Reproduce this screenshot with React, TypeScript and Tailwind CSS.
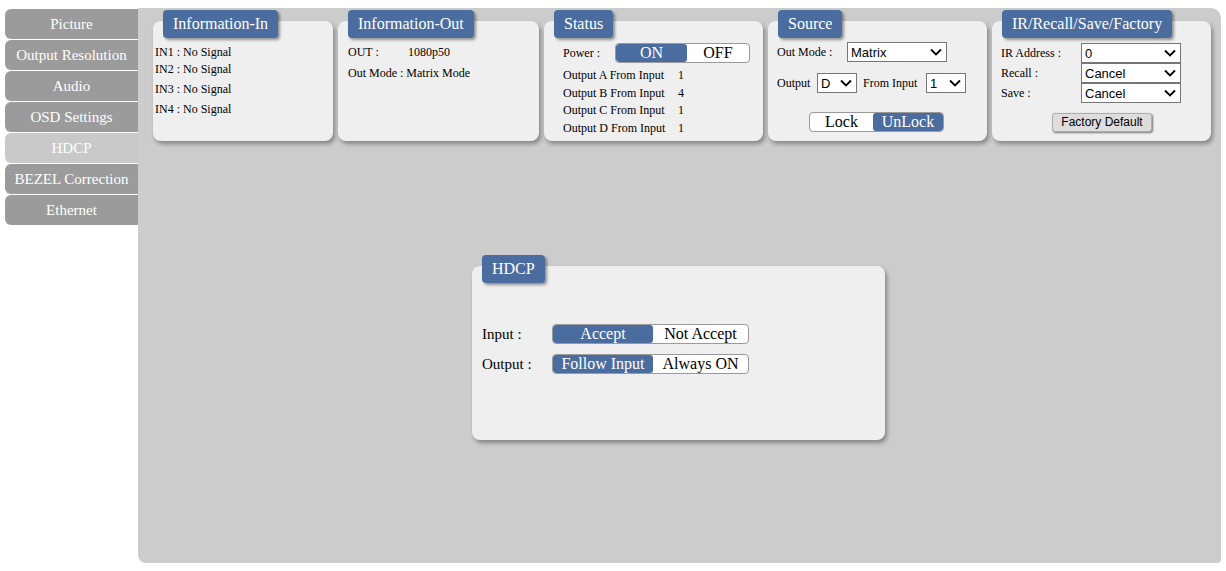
import React from "react";

const serif = "font-['Liberation_Serif','Times_New_Roman',serif]";
const sans = "font-['Liberation_Sans',Arial,sans-serif]";

const menu = ["Picture", "Output Resolution", "Audio", "OSD Settings", "HDCP", "BEZEL Correction", "Ethernet"];

function Chevron() {
  return (
    <svg width="12" height="8" viewBox="0 0 12 8" className="shrink-0">
      <path d="M1 1.5 L6 6.5 L11 1.5" fill="none" stroke="#000" strokeWidth="1.8" />
    </svg>
  );
}

function Select({ value, width }: { value: string; width: string }) {
  return (
    <div className={`flex h-[20px] items-center justify-between border border-[#767676] bg-white pl-[3px] pr-[4px] text-[13px] text-black ${sans} ${width}`}>
      <span className="leading-none">{value}</span>
      <Chevron />
    </div>
  );
}

function Panel({ title, className, children }: { title: string; className: string; children?: React.ReactNode }) {
  return (
    <div className={`relative rounded-[8px] bg-[#efefef] shadow-[2px_3px_4px_rgba(0,0,0,0.35)] ${className}`}>
      <div className={`absolute left-[10px] top-[-11px] h-[28px] rounded-[4px] bg-[#4b6c9e] px-[10px] text-[16px] leading-[28px] text-white shadow-[2px_2px_3px_rgba(0,0,0,0.4)] ${serif}`}>
        {title}
      </div>
      {children}
    </div>
  );
}

function Toggle({ left, right, active, leftW, className }: { left: string; right: string; active: "left" | "right"; leftW: string; className: string }) {
  return (
    <div className={`flex h-[20px] overflow-hidden rounded-[4px] border border-[#9a9a9a] bg-white text-[16px] leading-[18px] ${serif} ${className}`}>
      <div className={`${leftW} text-center ${active === "left" ? "rounded-[3px] bg-[#4b6c9e] text-white" : "text-black"}`}>{left}</div>
      <div className={`flex-1 text-center ${active === "right" ? "rounded-[3px] bg-[#4b6c9e] text-white" : "text-black"}`}>{right}</div>
    </div>
  );
}

export default function App() {
  return (
    <div className={`flex h-[571px] w-[1226px] bg-white pt-[8px] ${serif}`}>
      {/* Menu */}
      <div className="flex w-[138px] flex-col gap-px pl-[5px] pt-[1px]">
        {menu.map((m) => (
          <div
            key={m}
            className={`h-[30px] rounded-l-[6px] text-center text-[15px] leading-[30px] text-white ${m === "HDCP" ? "bg-[#c9c9c9]" : "bg-[#9b9b9b]"}`}
          >
            {m}
          </div>
        ))}
      </div>

      {/* Main area */}
      <div className="flex h-[555px] w-[1083px] flex-col rounded-tr-[10px] rounded-bl-[8px] rounded-br-[4px] bg-[#cccccc]">
        <div className="flex gap-[5px] pl-[15px] pt-[13px] text-[12px] text-black">
          <Panel title="Information-In" className="h-[120px] w-[180px]">
            <div className="flex flex-col pl-[2px] pt-[24px] leading-[14px]">
              <div>IN1 : No Signal</div>
              <div className="mt-[3px]">IN2 : No Signal</div>
              <div className="mt-[6px]">IN3 : No Signal</div>
              <div className="mt-[6px]">IN4 : No Signal</div>
            </div>
          </Panel>
          <Panel title="Information-Out" className="h-[120px] w-[201px]">
            <div className="flex flex-col pl-[10px] pt-[24px] leading-[14px]">
              <div className="flex">
                <span className="w-[60px]">OUT :</span>
                <span>1080p50</span>
              </div>
              <div className="mt-[7px]">Out Mode : Matrix Mode</div>
            </div>
          </Panel>
          <Panel title="Status" className="h-[120px] w-[219px]">
            <div className="flex flex-col pl-[19px] pt-[22px]">
              <div className="flex items-center">
                <span className="w-[52px] leading-[14px]">Power :</span>
                <Toggle left="ON" right="OFF" active="left" leftW="w-[71px]" className="w-[135px]" />
              </div>
              <div className="mt-[4px] flex flex-col leading-[17.5px]">
                {[
                  ["A", "1"],
                  ["B", "4"],
                  ["C", "1"],
                  ["D", "1"],
                ].map(([o, v]) => (
                  <div key={o} className="flex">
                    <span className="w-[115px]">Output {o} From Input</span>
                    <span>{v}</span>
                  </div>
                ))}
              </div>
            </div>
          </Panel>
          <Panel title="Source" className="h-[120px] w-[219px]">
            <div className="flex flex-col pl-[9px] pt-[21px]">
              <div className="flex items-center">
                <span className="w-[70px]">Out Mode :</span>
                <Select value="Matrix" width="w-[100px]" />
              </div>
              <div className="mt-[11px] flex items-center">
                <span className="w-[40px]">Output</span>
                <Select value="D" width="w-[40px]" />
                <span className="ml-[6px] w-[63px]">From Input</span>
                <Select value="1" width="w-[40px]" />
              </div>
              <Toggle left="Lock" right="UnLock" active="right" leftW="w-[63px]" className="ml-[32px] mt-[19px] w-[135px]" />
            </div>
          </Panel>
          <Panel title="IR/Recall/Save/Factory" className="h-[120px] w-[219px]">
            <div className="flex flex-col pl-[9px] pt-[22px]">
              {[
                ["IR Address :", "0"],
                ["Recall :", "Cancel"],
                ["Save :", "Cancel"],
              ].map(([l, v]) => (
                <div key={l} className="flex items-center">
                  <span className="w-[80px]">{l}</span>
                  <Select value={v} width="w-[100px]" />
                </div>
              ))}
              <div className={`ml-[51px] mt-[10px] h-[19px] w-[100px] rounded-[3px] border border-[#adadad] bg-[#dddddd] text-center text-[12px] leading-[17px] text-black shadow-[1px_1px_2px_rgba(0,0,0,0.5)] ${sans}`}>
                Factory Default
              </div>
            </div>
          </Panel>
        </div>

        {/* HDCP */}
        <Panel title="HDCP" className="mx-[auto] mt-[125px] h-[174px] w-[413px] -translate-x-px text-[15px] text-black">
          <div className="flex flex-col gap-[10px] pl-[10px] pt-[58px]">
            <div className="flex h-[20px] items-center">
              <span className="w-[70px]">Input :</span>
              <Toggle left="Accept" right="Not Accept" active="left" leftW="w-[100px]" className="w-[197px]" />
            </div>
            <div className="flex h-[20px] items-center">
              <span className="w-[70px]">Output :</span>
              <Toggle left="Follow Input" right="Always ON" active="left" leftW="w-[100px]" className="w-[197px]" />
            </div>
          </div>
        </Panel>
      </div>
    </div>
  );
}
